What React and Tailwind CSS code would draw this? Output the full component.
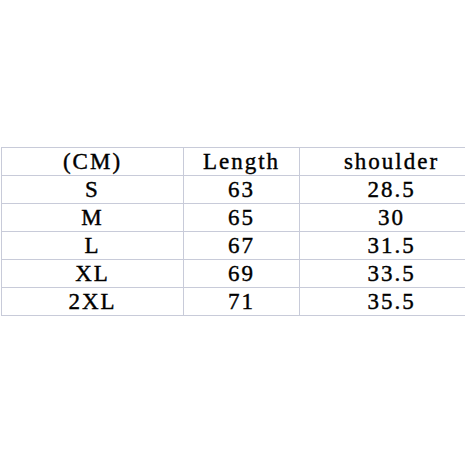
const rows = [
  ["(CM)", "Length", "shoulder"],
  ["S", "63", "28.5"],
  ["M", "65", "30"],
  ["L", "67", "31.5"],
  ["XL", "69", "33.5"],
  ["2XL", "71", "35.5"],
];

export default function App() {
  return (
    <div className="w-[465px] h-[465px] bg-white overflow-hidden">
      <div className="pt-[147px] pl-[1px] w-[600px]">
        <table
          className="border-collapse table-fixed w-[482px] text-black text-[23px] font-normal tracking-[2px] [-webkit-text-stroke:0.4px_black]"
          style={{ fontFamily: '"Liberation Serif", "DejaVu Serif", serif' }}
        >
          <colgroup>
            <col className="w-[182px]" />
            <col className="w-[116px]" />
            <col className="w-[184px]" />
          </colgroup>
          <tbody>
            {rows.map((r, i) => (
              <tr key={i} className="h-[28px]">
                {r.map((c, j) => (
                  <td
                    key={j}
                    className="border border-[#c8cbd9] text-center p-0 leading-[27px] whitespace-nowrap"
                  >
                    {c}
                  </td>
                ))}
              </tr>
            ))}
          </tbody>
        </table>
      </div>
    </div>
  );
}
